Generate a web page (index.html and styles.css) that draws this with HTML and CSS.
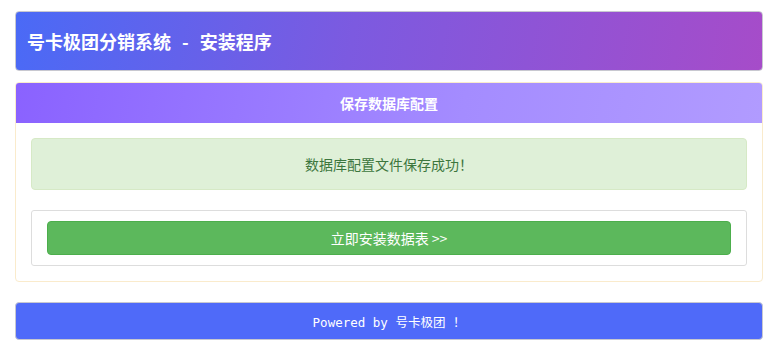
FILE: index.html
```html
<!DOCTYPE html>
<html lang="zh-CN">
	<head>
		<meta charset="utf-8" />
		<meta name="viewport" content="width=device-width, initial-scale=1" />
		<title>号卡极团分销系统 - 安装程序</title>
<link rel="stylesheet" href="styles.css">
	</head>
	<body>
		<div class="wrap">
			<div class="top">
				<h1>号卡极团分销系统<span class="dash">-</span>安装程序</h1>
			</div>

			<div class="panel">
				<div class="panel-head">保存数据库配置</div>
				<div class="panel-body">
					<div class="alert">数据库配置文件保存成功！</div>
					<div class="well">
						<a class="btn" href="#">立即安装数据表 &gt;&gt;</a>
					</div>
				</div>
			</div>

			<div class="foot">Powered by 号卡极团 ！</div>
		</div>
	</body>
</html>
```

FILE: styles.css
```css
* {
	margin: 0;
	padding: 0;
	box-sizing: border-box;
}

body {
	background: #fff;
	font-family: "Noto Sans CJK SC", "Noto Sans", sans-serif;
	font-size: 14px;
	color: #333;
}

.wrap {
	display: flex;
	flex-direction: column;
	padding: 11px 10px 0 15px;
}

.top {
	height: 60px;
	border: 1px solid #c8c8d0;
	border-radius: 4px;
	background: linear-gradient(100deg, #4a6af6, #7c5ae0 45%, #a64cc9);
	display: flex;
	align-items: center;
	padding-left: 11px;
}

.top h1 {
	color: #fff;
	font-size: 18px;
	font-weight: bold;
	line-height: 1;
}

.top .dash {
	margin: 0 11px;
}

.panel {
	margin-top: 11px;
	border: 1px solid #faebcc;
	border-radius: 4px;
	overflow: hidden;
}

.panel-head {
	height: 40px;
	background: linear-gradient(100deg, #8a62ff, #a48cff 60%, #b19bff);
	color: #fff;
	font-size: 14px;
	font-weight: bold;
	display: flex;
	align-items: center;
	justify-content: center;
}

.panel-body {
	padding: 15px 15px 15px;
}

.alert {
	height: 52px;
	background: #dff0d8;
	border: 1px solid #d6e9c6;
	border-radius: 4px;
	color: #3c763d;
	display: flex;
	align-items: center;
	justify-content: center;
}

.well {
	margin-top: 20px;
	border: 1px solid #ddd;
	border-radius: 3px;
	padding: 10px 15px;
}

.btn {
	display: flex;
	align-items: center;
	justify-content: center;
	height: 34px;
	background: #5cb85c;
	border: 1px solid #4cae4c;
	border-radius: 4px;
	color: #fff;
	text-decoration: none;
}

.foot {
	margin-top: 20px;
	height: 38px;
	background: #4f6af9;
	border: 1px solid #c8c8d0;
	border-radius: 4px;
	color: #fff;
	font-family: "DejaVu Sans Mono", "Noto Sans CJK SC", monospace;
	font-size: 12.5px;
	display: flex;
	align-items: center;
	justify-content: center;
}
```
